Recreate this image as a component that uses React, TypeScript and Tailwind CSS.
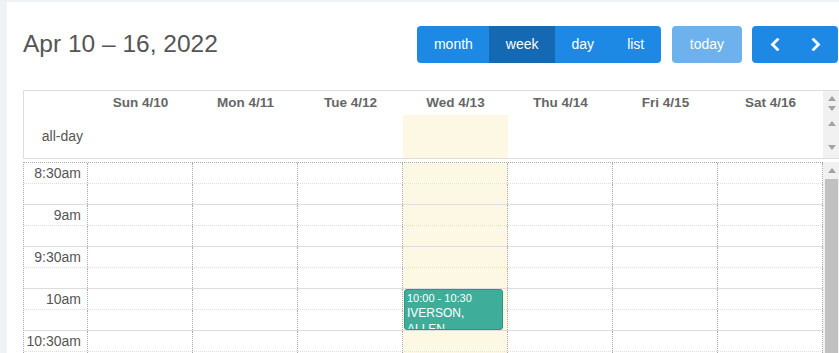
import React from "react";

const days = [
  { label: "Sun 4/10" },
  { label: "Mon 4/11" },
  { label: "Tue 4/12" },
  { label: "Wed 4/13", today: true },
  { label: "Thu 4/14" },
  { label: "Fri 4/15" },
  { label: "Sat 4/16" },
];

const slots = ["8:30am", "9am", "9:30am", "10am", "10:30am"];

const Arrow = ({ up }: { up?: boolean }) => (
  <svg width="8" height="5" viewBox="0 0 8 5" className="block">
    <polygon points={up ? "0,5 4,0 8,5" : "0,0 8,0 4,5"} fill="#a3a3a3" />
  </svg>
);

const Chevron = ({ left }: { left?: boolean }) => (
  <svg width="10" height="13" viewBox="0 0 10 13" className="block">
    <polyline
      points={left ? "7.5,1.5 2.5,6.5 7.5,11.5" : "2.5,1.5 7.5,6.5 2.5,11.5"}
      fill="none"
      stroke="white"
      strokeWidth="2.8"
      strokeLinecap="square"
    />
  </svg>
);

const EventCard = () => (
  <div className="absolute left-[1px] top-0 z-10 h-[41px] w-[99px] overflow-hidden rounded-[3px] border border-[#2a9784] bg-[#3eae9b] px-[2px] pt-[1px] text-white">
    <div className="text-[11px] leading-[14px]">10:00 - 10:30</div>
    <div className="text-[12px] leading-[16px]">IVERSON,</div>
    <div className="text-[12px] leading-[16px]">ALLEN</div>
  </div>
);

export default function App() {
  return (
    <div className="h-[353px] w-[839px] overflow-hidden bg-[#eef1f5] font-['Liberation_Sans',Arial,sans-serif]">
      <div className="ml-[7px] mt-[2px] h-[351px] w-[840px] bg-white pl-4 pt-6">
        <div className="flex h-[37px] w-[816px] items-center">
          <h2 className="text-[24.5px] leading-none text-[#555]">Apr 10 – 16, 2022</h2>
          <div className="ml-auto mr-[1px] flex h-[37px] items-stretch text-[14px] text-white">
            <div className="flex overflow-hidden rounded-[4px] bg-[#1e88e5]">
              <span className="flex items-center px-[16.5px]">month</span>
              <span className="flex items-center bg-[#1569b3] px-[16.5px]">week</span>
              <span className="flex items-center px-[16.5px]">day</span>
              <span className="flex items-center px-[16.5px]">list</span>
            </div>
            <div className="ml-[11px] flex items-center rounded-[4px] bg-[#6db2ed] px-[18px]">today</div>
            <div className="ml-[10px] flex w-[86px] rounded-[4px] bg-[#1e88e5]">
              <span className="flex flex-1 items-center justify-center pl-[2px]">
                <Chevron left />
              </span>
              <span className="flex flex-1 items-center justify-center pr-[2px]">
                <Chevron />
              </span>
            </div>
          </div>
        </div>

        <div className="mt-[27px] w-[817px]">
          {/* header + all-day */}
          <div className="border-b border-l border-t border-[#ddd]">
            <div className="flex h-[24px]">
              <div className="w-[64px]" />
              {days.map((d) => (
                <div
                  key={d.label}
                  className="flex w-[105px] items-center justify-center text-[13.5px] font-bold text-[#666]"
                >
                  {d.label}
                </div>
              ))}
              <div className="flex w-[17px] flex-col items-center gap-[5px] bg-[#f1f1f1] pt-[5px]">
                <Arrow up />
                <Arrow />
              </div>
            </div>
            <div className="flex h-[43px]">
              <div className="flex w-[64px] items-center justify-end pr-[5px] text-[14px] text-[#555]">
                all-day
              </div>
              {days.map((d) => (
                <div key={d.label} className={`w-[105px] ${d.today ? "bg-[#fcf8e3]" : ""}`} />
              ))}
              <div className="flex w-[17px] flex-col items-center justify-between bg-[#f1f1f1] pb-[8px] pt-[6px]">
                <Arrow up />
                <Arrow />
              </div>
            </div>
          </div>

          {/* time grid */}
          <div className="mt-[3px] flex">
            <div className="border-l border-t border-dotted border-[#aaa]">
              {slots.map((label) => (
                <div key={label}>
                  <div className="flex h-[21px] border-b border-dotted border-[#ddd]">
                    <div className="flex w-[64px] items-center justify-end border-r border-dotted border-[#aaa] pr-[6px] text-[14px] text-[#555]">
                      {label}
                    </div>
                    {days.map((d) => (
                      <div
                        key={d.label}
                        className={`relative w-[105px] border-r border-dotted border-[#aaa] ${d.today ? "bg-[#fcf8e3]" : ""}`}
                      >
                        {d.today && label === "10am" ? <EventCard /> : null}
                      </div>
                    ))}
                  </div>
                  <div className="flex h-[21px] border-b border-solid border-[#ddd]">
                    <div className="w-[64px] border-r border-dotted border-[#aaa]" />
                    {days.map((d) => (
                      <div
                        key={d.label}
                        className={`w-[105px] border-r border-dotted border-[#aaa] ${d.today ? "bg-[#fcf8e3]" : ""}`}
                      />
                    ))}
                  </div>
                </div>
              ))}
            </div>
            <div className="flex w-[17px] flex-col items-center bg-[#f1f1f1]">
              <div className="pt-[6px]">
                <Arrow up />
              </div>
              <div className="mt-[6px] h-[200px] w-[13px] bg-[#c1c1c1]" />
            </div>
          </div>
        </div>
      </div>
    </div>
  );
}
